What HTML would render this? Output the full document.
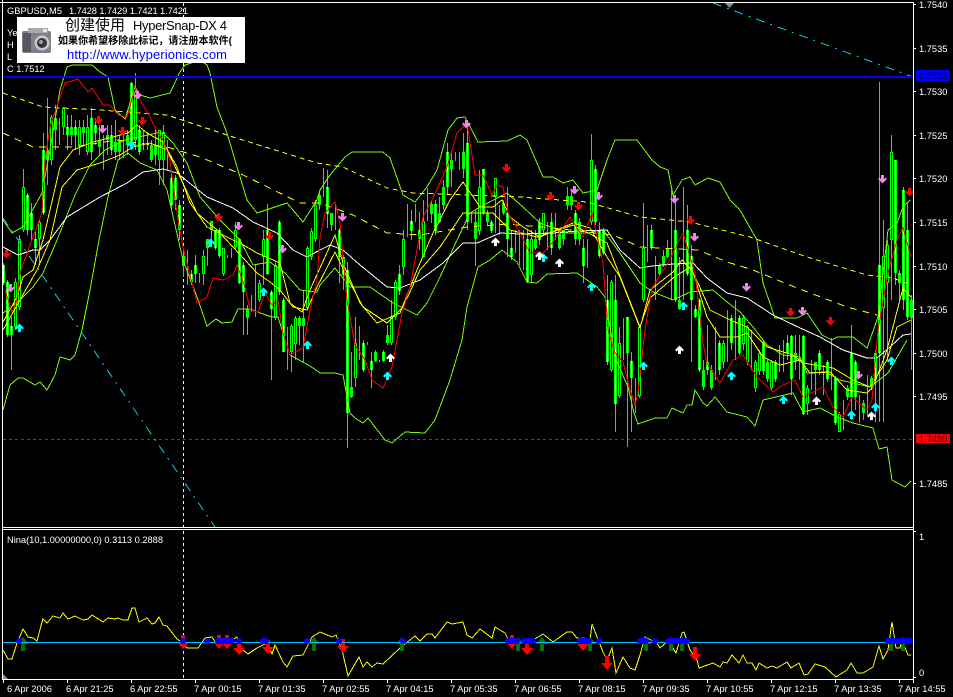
<!DOCTYPE html>
<html><head><meta charset="utf-8"><title>GBPUSD,M5</title>
<style>html,body{margin:0;padding:0;background:#000;overflow:hidden}svg{display:block}
text{font-family:"Liberation Sans","WenQuanYi Zen Hei","Noto Sans CJK SC",sans-serif;font-size:9.3px;fill:#fff}
.l{fill:none;stroke-width:1;shape-rendering:crispEdges}</style></head><body>
<svg width="953" height="697" viewBox="0 0 953 697" xmlns="http://www.w3.org/2000/svg">
<defs>
<path id="d" d="M-1 0h3v4l1.5-1.5 1.5 1.5-4.5 4.5-4.5-4.5 1.5-1.5 1.5 1.5z"/>
<path id="u" d="M-1 9h3v-4l1.5 1.5 1.5-1.5-4.5-4.5-4.5 4.5 1.5 1.5 1.5-1.5z"/>
<path id="D" d="M-2 0h4v7h4l-6 7-6-7h4z"/>
<path id="U" d="M-2 14h4v-7h4l-6-7-6 7h4z"/>
<path id="bf" d="M3 265V283M7 282V335M11 326V335M27 195V230M31 213V230M35 239V248M43 150V213M67 127V135M75 127V135M91 118V152M95 125V133M111 135V150M131 83V147M139 130V152M171 178V205M175 178V200M179 205V230M191 274V282M195 265V274M215 230V248M219 230V256M239 239V283M243 265V292M267 230V274M271 292V309M279 222V292M283 300V352M327 187V214M339 230V257M343 257V275M347 270V413M363 343V370M371 361V370M383 352V361M399 274V291M411 221V231M419 230V239M435 204V231M447 152V187M467 143V222M483 169V213M491 222V231M507 213V239M511 248V257M527 239V282M539 222V240M551 222V248M575 213V239M583 248V266M595 169V222M599 230V256M603 230V253M607 300V362M615 300V404M627 317V353M631 361V378M651 230V248M675 230V300M687 230V274M691 256V300M695 309V317M699 300V370M707 362V370M719 343V370M731 318V343M739 318V353M763 343V371M775 362V379M787 343V353M791 336V379M803 336V414M819 353V370M827 362V379M835 378V423M851 353V397M855 362V397M875 353V379M879 265V353M895 160V273M903 190V300M907 230V317"/>
<path id="bh" d="M15 282V327M19 239V307M23 187V230M39 222V239M47 150V160M51 117V160M55 118V130M63 108V127M71 127V135M79 127V145M83 127V133M87 127V152M99 140V147M107 135V140M115 142V152M119 140V152M127 135V145M135 92V140M151 145V160M155 145V155M159 130V160M163 132V160M183 256V266M203 256V274M207 239V248M211 221V230M223 248V274M235 230V247M247 309V318M259 283V300M263 239V257M275 265V318M291 326V352M295 318V344M299 318V326M303 318V326M307 248V308M311 231V257M315 205V239M319 195V205M331 213V225M351 387V397M355 343V378M375 352V361M387 335V343M391 317V343M395 282V317M403 239V267M423 221V257M431 204V214M439 213V222M443 187V205M451 160V169M463 152V169M475 222V239M479 187V231M487 213V222M495 178V197M503 203V213M531 239V275M535 239V248M543 213V230M559 230V248M563 230V239M567 196V205M571 196V205M579 222V239M591 160V222M611 282V370M619 343V396M639 327V396M643 248V300M659 265V274M663 256V265M667 248V257M679 300V309M703 370V387M711 370V388M723 343V362M743 318V344M747 327V362M755 362V388M759 353V371M767 362V379M771 362V388M795 353V362M807 388V404M815 362V370M839 414V432M847 388V397M863 403V413M871 378V387M883 256V308M887 245V283M891 152V240M899 273V283M911 300V318"/>
</defs>
<rect width="953" height="697" fill="#000"/>
<!-- horizontal lines -->
<path class="l" stroke="#f00" stroke-dasharray="3 3" d="M3 439.5H913"/>
<path class="l" stroke="#fff" stroke-dasharray="3 3" d="M183.5 3V680"/>
<!-- candle wicks -->
<path class="l" stroke="#0f0" d="M3.5 263V285M7.5 280V337M11.5 317V370M15.5 278V330M19.5 235V310M23.5 169V232M27.5 193V235M31.5 203V240M35.5 232V265M39.5 220V265M43.5 133V215M47.5 98V185M51.5 115V165M55.5 105V150M59.5 118V145M63.5 107V135M67.5 115V150M71.5 115V145M75.5 120V150M79.5 120V155M83.5 120V145M87.5 115V155M91.5 108V160M95.5 118V145M99.5 125V155M103.5 135V170M107.5 125V155M111.5 125V155M115.5 120V160M119.5 135V160M123.5 130V158M127.5 130V155M131.5 82V150M135.5 73V150M139.5 125V155M143.5 130V150M147.5 132V150M151.5 140V162M155.5 130V165M159.5 130V185M163.5 125V185M167.5 140V170M171.5 170V210M175.5 175V210M179.5 200V240M183.5 248V277M187.5 250V285M191.5 270V285M195.5 255V283M199.5 273V283M203.5 250V285M207.5 239V266M211.5 221V245M215.5 230V250M219.5 228V258M223.5 248V276M227.5 255V258M231.5 248V258M235.5 222V250M239.5 238V284M243.5 262V335M247.5 305V335M251.5 295V312M255.5 265V317M259.5 280V302M263.5 230V285M267.5 204V275M271.5 290V380M275.5 262V320M279.5 220V295M283.5 298V352M287.5 327V370M291.5 324V372M295.5 316V360M299.5 316V345M303.5 290V362M307.5 246V310M311.5 228V260M315.5 200V242M319.5 192V210M323.5 168V197M327.5 170V228M331.5 213V231M335.5 203V230M339.5 228V283M343.5 255V290M347.5 262V448M351.5 352V398M355.5 317V387M359.5 326V360M363.5 340V372M367.5 342V345M371.5 352V388M375.5 350V362M379.5 360V362M383.5 350V362M387.5 325V345M391.5 300V345M395.5 280V320M399.5 265V295M403.5 230V275M407.5 204V237M411.5 210V240M415.5 204V222M419.5 212V250M423.5 200V240M427.5 188V221M431.5 200V223M435.5 200V235M439.5 197V223M443.5 180V210M447.5 143V195M451.5 152V187M455.5 152V161M459.5 152V170M463.5 133V178M467.5 128V230M471.5 212V223M475.5 210V266M479.5 170V235M483.5 169V215M487.5 210V225M491.5 220V233M495.5 178V233M499.5 205V235M503.5 200V215M507.5 187V257M511.5 230V260M515.5 230V253M519.5 230V265M523.5 230V270M527.5 230V283M531.5 230V282M535.5 230V250M539.5 218V245M543.5 213V235M547.5 222V250M551.5 213V255M555.5 213V240M559.5 230V250M563.5 230V245M567.5 187V210M571.5 190V210M575.5 210V245M579.5 218V245M583.5 239V283M587.5 239V268M591.5 134V225M595.5 165V225M599.5 222V258M603.5 228V255M607.5 275V365M611.5 280V372M615.5 275V432M619.5 327V398M623.5 318V360M627.5 317V447M631.5 352V432M635.5 378V413M639.5 325V398M643.5 203V302M647.5 225V262M651.5 225V250M655.5 256V300M659.5 263V276M663.5 250V267M667.5 240V258M671.5 190V300M675.5 195V302M679.5 257V310M683.5 187V300M687.5 205V276M691.5 245V362M695.5 305V318M699.5 298V372M703.5 360V390M707.5 325V375M711.5 365V390M715.5 327V380M719.5 340V375M723.5 340V368M727.5 310V362M731.5 315V350M735.5 300V360M739.5 315V355M743.5 315V350M747.5 325V365M751.5 330V370M755.5 360V392M759.5 350V375M763.5 340V375M767.5 360V382M771.5 360V390M775.5 360V382M779.5 345V372M783.5 340V372M787.5 335V360M791.5 335V395M795.5 335V370M799.5 335V380M803.5 335V415M807.5 385V415M811.5 360V390M815.5 362V395M819.5 350V375M823.5 365V395M827.5 360V382M831.5 338V390M835.5 376V425M839.5 412V432M843.5 400V430M847.5 385V400M851.5 325V420M855.5 360V410M859.5 395V423M863.5 400V420M867.5 375V415M871.5 376V390M875.5 350V422M879.5 82V422M883.5 220V422M887.5 240V360M891.5 135V300M895.5 160V285M899.5 270V300M903.5 187V310M907.5 203V320M911.5 295V370"/>
<!-- bodies -->
<use href="#bf" stroke="#0f0" stroke-width="3" fill="none" transform="translate(.5 0)" shape-rendering="crispEdges"/>
<use href="#bh" stroke="#0f0" stroke-width="3" fill="none" transform="translate(.5 0)" shape-rendering="crispEdges"/>
<use href="#bf" stroke="#f4fff0" stroke-width="1" fill="none" transform="translate(.5 0)" shape-rendering="crispEdges"/>
<g transform="translate(.5 1)"><path stroke="#000" stroke-width="1" fill="none" shape-rendering="crispEdges" d="M15 282V325M19 239V305M23 187V228M39 222V237M51 117V158M63 108V125M79 127V143M87 127V150M135 92V138M159 130V158M163 132V158M203 256V272M223 248V272M235 230V245M259 283V298M263 239V255M275 265V316M291 326V350M295 318V342M307 248V306M311 231V255M315 205V237M355 343V376M391 317V341M395 282V315M403 239V265M423 221V255M479 187V229M495 178V195M531 239V273M543 213V228M591 160V220M611 282V368M619 343V394M639 327V394M643 248V298M723 343V360M743 318V342M747 327V360M755 362V386M759 353V369M771 362V386M807 388V402M839 414V430M883 256V306M887 245V281M891 152V238"/></g>
<!-- bollinger -->
<polyline class="l" stroke="#7cfc00" points="3,220 12,233 23,227 42,193 50,150 60,90 67,67 72,65 92,65 100,72 108,77 115,110 125,119 135,87 140,95 150,98 170,93 180,72 185,65 200,60 207,65 210,73 217,107 227,133 237,167 247,200 257,213 287,203 303,222 317,200 320,190 330,175 345,157 352,152 383,152 390,158 403,195 415,202 427,187 437,170 448,130 457,118 465,117 478,142 507,141 520,135 527,140 543,177 553,177 563,183 573,180 583,193 597,190 607,160 615,140 637,140 652,160 660,167 668,170 673,195 682,180 690,177 695,185 708,178 720,182 730,200 740,210 757,240 763,283 775,318 797,318 807,313 822,335 832,340 837,337 853,337 867,348 878,317 888,230 897,223 903,207 910,200"/>
<polyline class="l" stroke="#7cfc00" points="3,410 10,385 18,378 23,378 35,385 40,382 47,390 55,375 60,357 70,360 75,355 82,330 90,290 99,240 108,197 118,160 128,153 140,163 157,170 167,190 175,225 183,260 197,297 207,326 216,319 222,323 232,322 238,309 250,309 263,314 272,317 278,317 290,355 310,366 320,373 335,373 343,375 350,413 355,418 363,423 368,418 385,440 392,443 405,432 425,433 435,420 450,380 462,340 467,307 478,267 490,260 502,250 517,262 527,282 537,283 547,274 577,273 597,287 605,297 615,357 628,387 634,413 638,424 655,418 667,418 672,408 683,413 687,405 692,405 695,390 703,403 707,406 715,397 727,412 747,417 755,426 763,400 793,393 803,412 820,408 837,417 853,423 873,428 879,449 887,447 892,480 905,487 911,481"/>
<polyline class="l" stroke="#7cfc00" points="3,313 20,300 33,287 43,273 57,240 75,195 90,165 105,150 125,140 157,133 163,133 173,143 187,163 200,197 220,220 240,240 253,265 270,262 285,273 300,290 317,292 320,285 335,268 350,287 370,287 393,303 417,315 427,303 440,277 457,240 470,213 480,207 507,193 523,207 540,223 567,233 587,233 603,230 620,253 640,283 653,292 673,300 690,292 713,290 727,302 740,312 753,327 767,345 783,355 800,357 807,373 825,372 840,380 870,387 888,373 907,340"/>
<!-- slow MA white -->
<polyline class="l" stroke="#fff" points="3,247 18,255 33,250 40,250 50,240 67,217 100,197 127,183 143,172 163,169 177,173 207,197 233,208 253,222 277,233 293,250 307,257 320,250 330,245 343,250 360,265 387,287 400,288 420,280 443,263 463,243 477,243 500,233 520,234 553,233 577,231 607,230 620,250 640,268 652,266 673,264 693,263 707,278 727,293 747,298 773,315 800,328 820,337 843,350 867,358 877,358 890,347 903,335 911,334"/>
<!-- dashed yellow -->
<polyline class="l" stroke="#ff0" stroke-dasharray="5 4" points="3,93 43,107 100,110 167,115 233,137 317,163 343,167 387,188 413,193 520,197 587,202 640,217 690,222 750,237 807,257 867,275 893,278 911,285"/>
<polyline class="l" stroke="#ff0" stroke-dasharray="7 6" points="3,133 33,147 73,147 117,140 167,147 200,157 243,175 300,203 320,203 353,215 387,233 420,235 467,227 507,224 553,228 613,235 640,247 698,250 727,262 753,270 797,288 847,307 877,315"/>
<!-- solid yellow -->
<polyline class="l" stroke="#ff0" points="3,322 17,297 23,277 33,270 43,240 60,167 73,150 93,142 113,137 128,133 137,125 147,133 163,142 177,167 190,203 207,227 233,240 240,243 257,253 280,263 290,303 302,312 310,290 320,268 335,235 343,263 360,303 377,323 400,313 417,270 433,233 450,200 463,182 480,207 493,207 502,200 510,217 523,227 540,237 573,223 590,228 607,257 620,277 640,328 650,290 673,272 682,260 693,272 707,317 720,337 737,337 747,333 763,357 780,365 800,360 810,373 830,372 847,390 867,393 873,387 887,350 903,288 911,297"/>
<polyline class="l" stroke="#ff0" points="3,330 20,300 37,270 50,240 62,187 77,170 100,163 120,155 133,147 150,143 167,150 180,177 197,213 217,230 233,247 257,273 270,282 280,290 293,307 307,310 317,287 335,252 347,277 363,307 387,323 403,307 420,270 440,247 463,213 480,213 493,213 510,230 537,237 573,225 607,243 640,327 650,298 673,278 690,267 698,283 710,310 730,320 747,327 767,347 793,355 803,363 833,368 853,380 870,387 887,360 897,327 911,320"/>
<!-- red -->
<polyline class="l" stroke="#f00" points="5,290 12,312 17,300 20,273 30,245 42,213 45,160 50,127 58,103 65,83 78,79 88,92 92,88 103,105 110,105 118,115 127,117 135,88 140,100 150,117 157,132 163,140 170,160 177,213 183,247 197,303 207,297 213,278 223,280 233,275 237,265 245,287 250,310 258,312 265,293 272,305 278,300 283,333 290,355 303,348 310,310 317,280 320,237 325,213 335,202 340,223 347,300 355,345 365,360 372,380 383,388 392,367 402,313 410,287 423,217 433,198 447,167 457,133 467,123 475,175 483,175 492,195 497,185 503,187 508,213 520,233 530,253 543,253 553,242 570,217 583,237 592,213 603,263 608,330 615,353 623,362 630,390 635,405 638,393 645,330 652,288 668,263 683,233 695,273 703,343 707,363 720,383 733,360 743,355 757,377 773,392 783,385 795,380 803,397 823,387 833,407 843,417 852,397 867,410 872,400 878,330 888,273 897,240 903,227 911,257"/>
<!-- cyan trend lines -->
<path class="l" stroke="#00d0e0" stroke-dasharray="9 6 2 6" d="M3 218L215 527M713 3L913 77"/>
<!-- blue level -->
<rect x="3" y="76" width="911" height="2" fill="#00f"/>
<!-- arrows -->
<g fill="#f00"><use href="#d" x="98" y="116"/><use href="#d" x="122" y="127"/><use href="#d" x="142" y="117"/><use href="#d" x="218" y="213"/><use href="#d" x="269" y="232"/><use href="#d" x="6" y="250"/><use href="#d" x="506" y="164"/><use href="#d" x="550" y="192"/><use href="#d" x="578" y="202"/><use href="#d" x="690" y="216"/><use href="#d" x="909" y="188"/><use href="#d" x="790" y="308"/><use href="#d" x="830" y="317"/></g>
<g fill="#ee82ee"><use href="#d" x="102" y="125"/><use href="#d" x="137" y="91"/><use href="#d" x="238" y="222"/><use href="#d" x="10" y="284"/><use href="#d" x="282" y="245"/><use href="#d" x="342" y="213"/><use href="#d" x="466" y="120"/><use href="#d" x="574" y="186"/><use href="#d" x="598" y="192"/><use href="#d" x="674" y="195"/><use href="#d" x="694" y="233"/><use href="#d" x="882" y="175"/><use href="#d" x="746" y="283"/><use href="#d" x="802" y="307"/><use href="#d" x="858" y="371"/></g>
<g fill="#00ffff"><use href="#u" x="19" y="323"/><use href="#u" x="210" y="238"/><use href="#u" x="263" y="287"/><use href="#u" x="307" y="340"/><use href="#u" x="131" y="140"/><use href="#u" x="543" y="253"/><use href="#u" x="591" y="282"/><use href="#u" x="643" y="361"/><use href="#u" x="683" y="301"/><use href="#u" x="731" y="371"/><use href="#u" x="783" y="395"/><use href="#u" x="851" y="410"/><use href="#u" x="875" y="402"/><use href="#u" x="891" y="356"/><use href="#u" x="387" y="371"/></g>
<g fill="#fff"><use href="#u" x="495" y="237"/><use href="#u" x="539" y="251"/><use href="#u" x="559" y="258"/><use href="#u" x="679" y="345"/><use href="#u" x="816" y="396"/><use href="#u" x="871" y="411"/><use href="#u" x="390" y="353"/></g>
<polygon points="725,3 734,3 729.5,8" fill="#8090a0"/>
<!-- frame -->
<path class="l" stroke="#fff" d="M2.5 0V679.5H913.5M0 2.5H913.5V683M2.5 527.5H913.5M2.5 529.5H913.5"/>
<path class="l" stroke="#fff" d="M913 4.5h3M913 48.5h3M913 91.5h3M913 135.5h3M913 178.5h3M913 222.5h3M913 266.5h3M913 309.5h3M913 353.5h3M913 396.5h3M913 483.5h3M913 531.5h3M913 677.5h3M3.5 680v3M67.5 680v3M131.5 680v3M195.5 680v3M259.5 680v3M323.5 680v3M387.5 680v3M451.5 680v3M515.5 680v3M579.5 680v3M643.5 680v3M707.5 680v3M771.5 680v3M835.5 680v3M899.5 680v3"/>
<!-- tags -->
<rect x="916" y="70" width="34" height="11" fill="#00f"/>
<rect x="916" y="434" width="34" height="9" fill="#f00"/>
<!-- price labels -->
<text x="919" y="8">1.7540</text><text x="919" y="52">1.7535</text><text x="919" y="95">1.7530</text><text x="919" y="139">1.7525</text><text x="919" y="182">1.7520</text><text x="919" y="226">1.7515</text><text x="919" y="270">1.7510</text><text x="919" y="313">1.7505</text><text x="919" y="357">1.7500</text><text x="919" y="400">1.7495</text><text x="919" y="487">1.7485</text>
<text x="919" y="79" style="fill:#000040">1.7532</text><text x="919" y="442" style="fill:#400000">1.7490</text>
<text x="919" y="540">1</text><text x="919" y="676">0</text>
<!-- top info -->
<text x="7" y="14" textLength="55">GBPUSD,M5</text><text x="69" y="14" textLength="119">1.7428 1.7429 1.7421 1.7421</text>
<text x="7" y="36">Ye</text><text x="7" y="48">H</text><text x="7" y="60">L</text><text x="7" y="72">C 1.7512</text>
<!-- watermark -->
<rect x="17" y="17" width="228" height="46" fill="#fff"/>
<rect x="22" y="31" width="29" height="22" rx="2" fill="#7f8088"/>
<rect x="28" y="28" width="20" height="5" fill="#a8a8b0"/>
<rect x="23" y="33" width="8" height="19" fill="#55565e"/>
<circle cx="42" cy="43" r="7.5" fill="#c8c8cc"/><circle cx="42" cy="43" r="5" fill="#33343c"/><circle cx="41" cy="42" r="2" fill="#9aa0b0"/>
<rect x="43" y="29" width="4" height="3" fill="#e8e8e8"/>
<text x="65" y="30" style="font-size:15px;fill:#000">创建使用</text>
<text x="133" y="30" textLength="94" style="font-size:13px;fill:#000">HyperSnap-DX 4</text>
<text x="58" y="44" textLength="174" style="font-size:10px;fill:#000;font-weight:bold">如果你希望移除此标记，请注册本软件(</text>
<text x="67" y="59" textLength="160" style="font-size:13px;fill:#00f">http://www.hyperionics.com</text>
<!-- indicator -->
<text x="7" y="543" textLength="156">Nina(10,1.00000000,0) 0.3113 0.2888</text>
<polygon points="3,674 8,679 3,679" fill="#8090a0"/>
<polyline class="l" stroke="#ff0" points="3,650 8,659 12,659 17,643 23,629 28,637 33,638 37,641 42,622 43,619 47,623 53,616 60,618 63,613 68,619 75,616 83,620 88,619 92,615 103,622 108,618 115,619 118,618 123,620 128,620 132,608 135,608 139,622 147,618 152,624 155,623 159,617 163,625 167,626 177,639 182,642 187,648 198,648 205,638 212,637 217,645 227,643 237,637 240,648 248,654 257,648 267,643 272,654 275,645 283,662 287,667 293,656 303,655 312,637 320,632 332,637 336,635 342,650 348,676 359,657 363,667 367,662 372,667 377,663 383,664 400,648 415,636 420,641 427,634 432,634 435,638 447,622 452,624 463,622 467,635 472,638 480,629 492,638 495,627 505,633 510,643 533,640 543,634 553,642 567,632 572,632 577,638 590,640 592,624 603,652 607,660 612,648 616,673 623,657 630,668 635,670 640,655 645,637 657,643 660,648 667,642 670,644 676,653 682,633 684,632 690,650 697,660 699,668 713,663 720,667 723,662 727,663 732,655 739,663 743,655 747,663 752,663 756,670 759,663 767,668 772,666 777,668 787,662 791,668 799,663 804,675 808,674 815,664 825,667 836,677 847,670 851,663 857,673 863,673 873,667 879,646 883,659 888,650 892,622 896,648 900,648 902,640 908,655 911,655"/>
<g fill="#f00"><use href="#D" x="183" y="635"/><use href="#D" x="219" y="635"/><use href="#D" x="227" y="635"/><use href="#D" x="239" y="641"/><use href="#D" x="268" y="640"/><use href="#D" x="343" y="639"/><use href="#D" x="512" y="635"/><use href="#D" x="527" y="641"/><use href="#D" x="583" y="637"/><use href="#D" x="607" y="656"/><use href="#D" x="695" y="647"/></g>
<g fill="#0a6e0a"><use href="#U" x="23" y="637"/><use href="#U" x="314" y="637"/><use href="#U" x="402" y="637"/><use href="#U" x="518" y="637"/><use href="#U" x="542" y="637"/><use href="#U" x="590" y="637"/><use href="#U" x="646" y="637"/><use href="#U" x="671" y="637"/><use href="#U" x="682" y="637"/><use href="#U" x="891" y="637"/><use href="#U" x="903" y="637"/></g>
<path d="M3 642.5H911" stroke="#00bfff" stroke-width="1" fill="none" shape-rendering="crispEdges"/>
<path d="M19 641h.1M183 641h.1M207 641h.1M218 641H232M239 641h.1M263 641h3M307 641h.1M339 641h.1M403 641h.1M508 641h9M524 641h9M580 641h9M599 641h.1M640 641h6M655 641h.1M668 641h14M687 641h.1M888 641h10M900 641h10" stroke="#00f" stroke-width="6" stroke-linecap="round" fill="none"/>
<!-- time labels -->
<text x="7" y="692">6 Apr 2006</text><text x="66" y="692">6 Apr 21:25</text><text x="130" y="692">6 Apr 22:55</text><text x="194" y="692">7 Apr 00:15</text><text x="258" y="692">7 Apr 01:35</text><text x="322" y="692">7 Apr 02:55</text><text x="386" y="692">7 Apr 04:15</text><text x="450" y="692">7 Apr 05:35</text><text x="514" y="692">7 Apr 06:55</text><text x="578" y="692">7 Apr 08:15</text><text x="642" y="692">7 Apr 09:35</text><text x="706" y="692">7 Apr 10:55</text><text x="770" y="692">7 Apr 12:15</text><text x="834" y="692">7 Apr 13:35</text><text x="898" y="692">7 Apr 14:55</text>
</svg>
</body></html>
